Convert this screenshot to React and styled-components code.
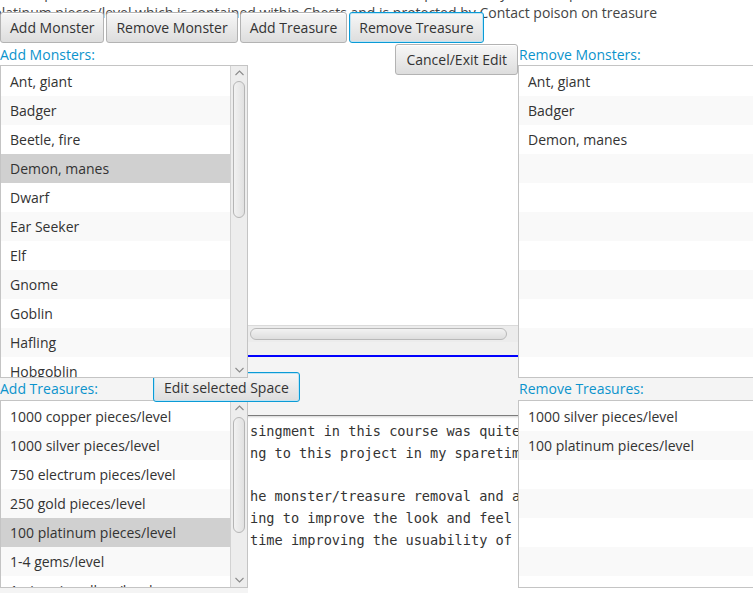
import React from 'react'
import styled, { createGlobalStyle, css } from 'styled-components'

const UI = `"Open Sans", "Liberation Sans", sans-serif`

const GlobalStyle = createGlobalStyle`
  html, body {
    margin: 0;
    padding: 0;
    background: #f4f4f4;
    font-family: ${UI};
  }
`

const monsters = [
  'Ant, giant', 'Badger', 'Beetle, fire', 'Demon, manes', 'Dwarf', 'Ear Seeker',
  'Elf', 'Gnome', 'Goblin', 'Hafling', 'Hobgoblin',
]
const treasures = [
  '1000 copper pieces/level', '1000 silver pieces/level', '750 electrum pieces/level',
  '250 gold pieces/level', '100 platinum pieces/level', '1-4 gems/level', '1 piece jewellery/level',
]
const chosenMonsters = ['Ant, giant', 'Badger', 'Demon, manes']
const chosenTreasures = ['1000 silver pieces/level', '100 platinum pieces/level']

const notes = [
  'singment in this course was quite enjoyable and I learned a lot',
  'ng to this project in my sparetime over the summer',
  '',
  'he monster/treasure removal and adding features',
  'ing to improve the look and feel of the interface',
  'time improving the usuability of the program',
]

function App() {
  return (
    <>
      <GlobalStyle />
      <Screen>
        <Backdrop>
          <Viewport>
            <StatusLines>
              <StatusLine>Also has 1000 silver pieces/level which is contained within a Locked Box and is protected by a Gas trap on treasure</StatusLine>
              <StatusLine>100 platinum pieces/level which is contained within Chests and is protected by Contact poison on treasure</StatusLine>
            </StatusLines>
          </Viewport>
          <HScroll>
            <HThumb />
          </HScroll>
          <GapStrip />
          <BlueRule />
          <EditPanel />
          <Notes>
            {notes.map((line, i) => (
              <NoteLine key={i}>{line || ' '}</NoteLine>
            ))}
          </Notes>
        </Backdrop>

        <Stage>
          <Toolbar>
            <Button>Add Monster</Button>
            <Button>Remove Monster</Button>
            <Button>Add Treasure</Button>
            <Button $focused>Remove Treasure</Button>
          </Toolbar>

          <SectionLabel $row={3} $col={1}>Add Monsters:</SectionLabel>
          <CancelButton>Cancel/Exit Edit</CancelButton>
          <SectionLabel $row={3} $col={3}>Remove Monsters:</SectionLabel>

          <ItemList
            row={4} col={1} top
            items={monsters} rows={11} selected={3}
            scroll={{ offset: 1, size: 137 }}
          />
          <ItemList row={4} col={3} items={chosenMonsters} rows={11} open />

          <SectionLabel $row={5} $col={1}>Add Treasures:</SectionLabel>
          <EditButton $focused>Edit selected Space</EditButton>
          <SectionLabel $row={5} $col={3}>Remove Treasures:</SectionLabel>

          <ItemList
            row={6} col={1}
            items={treasures} rows={7} selected={4}
            scroll={{ offset: 2, size: 116 }}
          />
          <ItemList row={6} col={3} items={chosenTreasures} rows={7} open />
        </Stage>
      </Screen>
    </>
  )
}

function ItemList({ row, col, items, rows, selected, scroll, open, top }) {
  const cells = Array.from({ length: rows }, (_, i) => items[i] || '')
  return (
    <ListFrame $row={row} $col={col} $open={open} $top={top}>
      <ListRows>
        {cells.map((text, i) => (
          <ListCell key={i} $odd={i % 2 === 1} $selected={i === selected}>
            {text}
          </ListCell>
        ))}
      </ListRows>
      {scroll && (
        <VScroll>
          <ArrowBox><Chevron up /></ArrowBox>
          <Track>
            <VThumb $offset={scroll.offset} $size={scroll.size} />
          </Track>
          <ArrowBox><Chevron /></ArrowBox>
        </VScroll>
      )}
    </ListFrame>
  )
}

function Chevron({ up }) {
  return (
    <svg width="9" height="6" viewBox="0 0 9 6">
      <path
        d={up ? 'M0.5 5 L4.5 1 L8.5 5' : 'M0.5 1 L4.5 5 L8.5 1'}
        fill="none"
        stroke="#8a8a8a"
        strokeWidth="1.1"
      />
    </svg>
  )
}

export default App

const Screen = styled.div`
  display: grid;
  width: 753px;
  height: 593px;
  overflow: hidden;
  background: #f4f4f4;

  > * {
    grid-area: 1 / 1;
  }
`

const Backdrop = styled.div`
  display: grid;
  grid-template-columns: 248px 270px 1fr;
  grid-template-rows: 325px 17px 13px 2px 59px 1fr;
  height: 593px;
`

const Viewport = styled.div`
  grid-column: 1 / -1;
  background: #fff;
  overflow: hidden;
`

const StatusLines = styled.div`
  display: flex;
  flex-direction: column;
  align-items: flex-end;
  width: 657px;
  margin-top: -17px;
  font-size: 14px;
  line-height: 20px;
  color: #444;
`

const StatusLine = styled.div`
  white-space: nowrap;
`

const HScroll = styled.div`
  grid-column: 2;
  display: flex;
  align-items: center;
  padding: 0 11px 0 2px;
  background: #ececec;
  border-top: 1px solid #dadada;
  box-sizing: border-box;
`

const HThumb = styled.div`
  flex: 1;
  height: 12px;
  border: 1px solid #b9b9b9;
  border-radius: 7px;
  background: linear-gradient(#f2f2f2, #dedede);
  box-sizing: border-box;
`

const GapStrip = styled.div`
  grid-column: 1 / -1;
  background: #f0f0f0;
`

const BlueRule = styled.div`
  grid-column: 2;
  background: #0000ff;
`

const EditPanel = styled.div`
  grid-column: 1 / -1;
  background: #f4f4f4;
  border-bottom: 1px solid #7c7c7c;
  box-shadow: 0 1px 2px rgba(0, 0, 0, 0.18);
  position: relative;
  z-index: 1;
`

const Notes = styled.div`
  grid-column: 2 / -1;
  background: #fff;
  padding: 5px 0 0 2px;
  overflow: hidden;
  font-family: "DejaVu Sans Mono", "Liberation Mono", monospace;
  font-size: 13.6px;
  line-height: 21.8px;
  color: #333;
`

const NoteLine = styled.div`
  white-space: pre;
`

const Stage = styled.div`
  display: grid;
  grid-template-columns: 248px 270px 235px;
  grid-template-rows: 12px 32px 21px 313px 22px 188px;
  position: relative;
  z-index: 2;
`

const Toolbar = styled.div`
  grid-row: 2;
  grid-column: 1 / -1;
  display: flex;
  gap: 2px;
  align-items: flex-start;
`

const Button = styled.button`
  height: 31px;
  padding: 0 9px;
  font-family: ${UI};
  font-size: 14px;
  color: #333;
  border: 1px solid #b3b3b3;
  border-radius: 3px;
  background: linear-gradient(#f7f7f7, #dddddd);
  box-shadow: inset 0 1px 0 #ffffff;
  white-space: nowrap;
  box-sizing: border-box;
  cursor: pointer;

  ${p => p.$focused && css`
    border-color: #0a9bd6;
    box-shadow: inset 0 0 0 1px #bfe3f3;
  `}
`

const CancelButton = styled(Button)`
  grid-row: 3;
  grid-column: 2;
  justify-self: end;
  align-self: start;
  padding: 0 10px;
  z-index: 3;
`

const EditButton = styled(Button)`
  grid-row: 5;
  grid-column: 1 / 3;
  justify-self: start;
  align-self: start;
  margin: -6px 0 0 153px;
  height: 30px;
  padding: 0 10px;
  z-index: 2;
`

const SectionLabel = styled.div`
  grid-row: ${p => p.$row};
  grid-column: ${p => p.$col};
  justify-self: start;
  align-self: center;
  padding-left: ${p => (p.$col === 3 ? '1px' : '0')};
  font-size: 14px;
  line-height: 20px;
  color: #0b93cc;
  white-space: nowrap;
`

const ListFrame = styled.div`
  grid-row: ${p => p.$row};
  grid-column: ${p => p.$col};
  display: grid;
  grid-template-columns: 1fr auto;
  width: ${p => (p.$open ? '260px' : 'auto')};
  border: 1px solid #c4c4c4;
  background: #fff;
  box-sizing: border-box;
  overflow: hidden;
  z-index: ${p => (p.$top ? 3 : 1)};
`

const ListRows = styled.div`
  padding-top: 1px;
  overflow: hidden;
`

const ListCell = styled.div`
  height: 29px;
  padding-left: 9px;
  font-size: 14px;
  line-height: 29px;
  color: #333;
  white-space: nowrap;
  overflow: hidden;
  background: ${p => (p.$selected ? '#d0d0d0' : p.$odd ? '#f9f9f9' : '#ffffff')};
`

const VScroll = styled.div`
  display: flex;
  flex-direction: column;
  width: 16px;
  background: #ededed;
  border-left: 1px solid #d2d2d2;
`

const ArrowBox = styled.div`
  display: flex;
  align-items: center;
  justify-content: center;
  height: 14px;
`

const Track = styled.div`
  flex: 1;
  padding: 0 2px;
`

const VThumb = styled.div`
  margin-top: ${p => p.$offset}px;
  height: ${p => p.$size}px;
  border: 1px solid #b5b5b5;
  border-radius: 6px;
  background: linear-gradient(to right, #f2f2f2, #e1e1e1);
  box-sizing: border-box;
`
